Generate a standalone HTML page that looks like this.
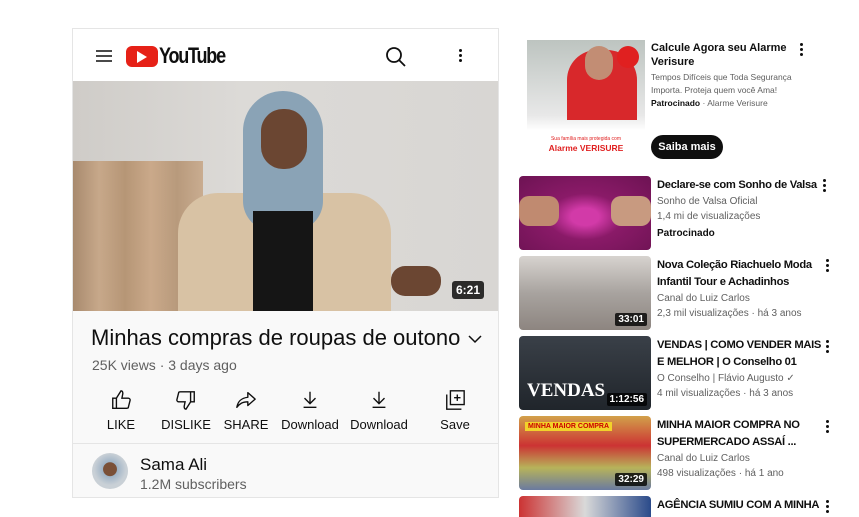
<!DOCTYPE html>
<html><head><meta charset="utf-8"><style>
*{margin:0;padding:0;box-sizing:border-box}
html,body{width:859px;height:517px;overflow:hidden}
body{background:#fff;font-family:"Liberation Sans",Arial,sans-serif;position:relative;color:#0f0f0f}
.card{position:absolute;left:72px;top:28px;width:427px;height:470px;border:1px solid #e5e5e5;background:#f9f9f9}
.hdr{position:absolute;left:0;top:0;width:425px;height:52px;background:#fff}
.video{position:absolute;left:0;top:52px;width:425px;height:230px;background:linear-gradient(90deg,#cfccc8,#dcdad7 40%,#d8d6d3);overflow:hidden}
.abs{position:absolute}
.act{position:absolute;top:360px;width:70px;text-align:center;font-size:13px}
.act svg{display:block;margin:0 auto 6px}
.r{position:absolute;left:657px;font-size:12px;line-height:16px;white-space:nowrap}
.r b{font-weight:bold;color:#0f0f0f;display:block;font-size:11.2px;line-height:17px;letter-spacing:-0.3px}
.r span{color:#606060;font-size:10px;display:block;line-height:15px}
.r i{font-style:normal;font-weight:bold;font-size:10px;color:#0f0f0f}
.th{position:absolute;left:519px;width:132px;height:74px;border-radius:4px;overflow:hidden}
.dur{position:absolute;right:4px;bottom:4px;background:rgba(0,0,0,.8);color:#fff;font-size:10px;font-weight:bold;padding:1px 3px;border-radius:2px}
.dots{position:absolute;width:3px}
.dots i{display:block;width:3px;height:3px;border-radius:50%;background:#0f0f0f;margin-bottom:2px}
</style></head><body>
<div class="card">
 <div class="hdr">
  <svg class="abs" style="left:22px;top:20px" width="18" height="14"><path d="M1 2h16M1 7h16M1 12h16" stroke="#0f0f0f" stroke-width="1.6"/></svg>
  <div class="abs" style="left:53px;top:17px;width:32px;height:21px;background:#e62117;border-radius:6px"></div>
  <svg class="abs" style="left:64px;top:22px" width="11" height="12"><path d="M0 0L10 6L0 12Z" fill="#fff"/></svg>
  <div class="abs" style="left:86px;top:14px;font-size:22px;font-weight:bold;letter-spacing:-1.5px;transform:scaleX(.82);transform-origin:left">YouTube</div>
  <svg class="abs" style="left:312px;top:17px" width="22" height="22"><circle cx="9" cy="9" r="7" fill="none" stroke="#0f0f0f" stroke-width="1.8"/><path d="M14 14l6 6" stroke="#0f0f0f" stroke-width="1.8"/></svg>
  <div class="dots" style="left:386px;top:20px"><i></i><i></i><i></i></div>
 </div>
 <div class="video">
  <div class="abs" style="left:0;top:80px;width:130px;height:150px;background:linear-gradient(90deg,#a88a6e,#c7a88a 20%,#b69676 40%,#caa98a 60%,#b89a7c 80%,#c9ac90)"></div>
  <div class="abs" style="left:105px;top:112px;width:213px;height:118px;background:#d8c2a4;border-radius:40px 40px 0 0"></div>
  <div class="abs" style="left:170px;top:10px;width:80px;height:140px;background:#8aa3b6;border-radius:40px 40px 30px 30px"></div>
  <div class="abs" style="left:188px;top:28px;width:46px;height:60px;background:#6b4632;border-radius:22px"></div>
  <div class="abs" style="left:180px;top:130px;width:60px;height:100px;background:#151515"></div>
  <div class="abs" style="left:318px;top:185px;width:50px;height:30px;background:#6b4632;border-radius:14px"></div>
  <div class="abs" style="right:14px;bottom:12px;background:rgba(0,0,0,.8);color:#fff;font-size:12px;font-weight:bold;padding:2px 4px;border-radius:3px">6:21</div>
 </div>
 <div class="abs" style="left:18px;top:296px;font-size:22px">Minhas compras de roupas de outono</div>
 <svg class="abs" style="left:395px;top:306px" width="14" height="9"><path d="M1 1l6 6 6-6" fill="none" stroke="#0f0f0f" stroke-width="1.5"/></svg>
 <div class="abs" style="left:19px;top:328px;font-size:14px;color:#606060">25K views · 3 days ago</div>
 <div class="act" style="left:13px"><svg width="22" height="22" viewBox="0 0 24 24"><path d="M3 10h4v11H3zM7 10l5-8c2 0 2 2 2 3l-1 5h7c1 0 2 1 2 2l-2 8c0 1-1 1-2 1H7" fill="none" stroke="#0f0f0f" stroke-width="1.5"/></svg>LIKE</div>
 <div class="act" style="left:78px"><svg width="22" height="22" viewBox="0 0 24 24"><path d="M21 14h-4V3h4zM17 14l-5 8c-2 0-2-2-2-3l1-5H4c-1 0-2-1-2-2l2-8c0-1 1-1 2-1h11" fill="none" stroke="#0f0f0f" stroke-width="1.5"/></svg>DISLIKE</div>
 <div class="act" style="left:138px"><svg width="22" height="22" viewBox="0 0 24 24"><path d="M14 4l8 7-8 7v-4c-6 0-9 2-12 6 1-6 4-10 12-11z" fill="none" stroke="#0f0f0f" stroke-width="1.5" stroke-linejoin="round"/></svg>SHARE</div>
 <div class="act" style="left:202px;width:70px"><svg width="22" height="22" viewBox="0 0 24 24"><path d="M12 3v13M6 10l6 6 6-6M5 20h14" fill="none" stroke="#0f0f0f" stroke-width="1.5"/></svg>Download</div>
 <div class="act" style="left:271px;width:70px"><svg width="22" height="22" viewBox="0 0 24 24"><path d="M12 3v13M6 10l6 6 6-6M5 20h14" fill="none" stroke="#0f0f0f" stroke-width="1.5"/></svg>Download</div>
 <div class="act" style="left:347px"><svg width="22" height="22" viewBox="0 0 24 24"><path d="M7 2h15v15H7zM3 6v16h16M14.5 6v7M11 9.5h7" fill="none" stroke="#0f0f0f" stroke-width="1.5"/></svg>Save</div>
 <div class="abs" style="left:0;top:414px;width:425px;height:1px;background:#e5e5e5"></div>
 <div class="abs" style="left:19px;top:424px;width:36px;height:36px;border-radius:50%;background:radial-gradient(circle at 50% 45%,#7a5038 25%,#9fb3c6 27%,#c9d0d6 60%)"></div>
 <div class="abs" style="left:67px;top:426px;font-size:17px">Sama Ali</div>
 <div class="abs" style="left:67px;top:447px;font-size:14px;color:#606060">1.2M subscribers</div>
</div>

<div class="abs" style="left:527px;top:40px;width:118px;height:116px;background:linear-gradient(180deg,#bdc4c0,#e8e8e8 65%,#fff 78%)">
 <div class="abs" style="left:40px;top:10px;width:70px;height:70px;background:#d8282b;border-radius:30px 30px 0 0"></div>
 <div class="abs" style="left:58px;top:6px;width:28px;height:34px;background:#c28d74;border-radius:14px"></div>
 <div class="abs" style="left:90px;top:6px;width:22px;height:22px;background:#e02020;border-radius:50%"></div>
 <div class="abs" style="left:0;top:96px;width:118px;text-align:center;color:#e02020;font-size:5px">Sua família mais protegida com</div>
 <div class="abs" style="left:0;top:103px;width:118px;text-align:center;color:#e02020;font-size:8.5px;font-weight:bold">Alarme VERISURE</div>
</div>
<div class="r" style="top:41px;left:651px"><b style="font-size:11px;line-height:14px;letter-spacing:0">Calcule Agora seu Alarme<br>Verisure</b><span style="font-size:8.5px;line-height:13px;margin-top:2px">Tempos Difíceis que Toda Segurança<br>Importa. Proteja quem você Ama!</span><span style="font-size:8.5px;line-height:13px"><i style="font-size:8.5px">Patrocinado</i> · Alarme Verisure</span></div>
<div class="abs" style="left:651px;top:135px;width:72px;height:24px;border-radius:12px;background:#0f0f0f;color:#fff;font-size:11px;font-weight:bold;text-align:center;line-height:24px">Saiba mais</div>
<div class="dots" style="left:800px;top:43px"><i></i><i></i><i></i></div>

<div class="th" style="top:176px;background:radial-gradient(ellipse at 50% 55%,#d23aa8 15%,#8a1a68 40%,#6d1353)"><div class="abs" style="left:0;top:20px;width:40px;height:30px;background:#c08a70;border-radius:10px"></div><div class="abs" style="right:0;top:20px;width:40px;height:30px;background:#c89a80;border-radius:10px"></div></div>
<div class="r" style="top:177px"><b>Declare-se com Sonho de Valsa</b><span>Sonho de Valsa Oficial</span><span>1,4 mi de visualizações</span><i>Patrocinado</i></div>
<div class="dots" style="left:823px;top:179px"><i></i><i></i><i></i></div>

<div class="th" style="top:256px;background:linear-gradient(180deg,#d7d3cf,#a8a39f 50%,#8d8580)"><div class="dur">33:01</div></div>
<div class="r" style="top:257px"><b>Nova Coleção Riachuelo Moda<br>Infantil Tour e Achadinhos</b><span>Canal do Luiz Carlos</span><span>2,3 mil visualizações · há 3 anos</span></div>
<div class="dots" style="left:826px;top:259px"><i></i><i></i><i></i></div>

<div class="th" style="top:336px;background:linear-gradient(180deg,#3a4048,#20252b)"><div class="abs" style="left:8px;top:44px;color:#fff;font-weight:bold;font-size:19px;font-family:'Liberation Serif',serif">VENDAS</div><div class="dur">1:12:56</div></div>
<div class="r" style="top:337px"><b>VENDAS | COMO VENDER MAIS<br>E MELHOR | O Conselho 01</b><span>O Conselho | Flávio Augusto ✓</span><span>4 mil visualizações · há 3 anos</span></div>
<div class="dots" style="left:826px;top:340px"><i></i><i></i><i></i></div>

<div class="th" style="top:416px;background:linear-gradient(180deg,#d2a14a,#c33 40%,#b7b35a 70%,#6a7aa0)"><div class="abs" style="left:6px;top:6px;background:#f2d22a;color:#c00;font-size:7px;font-weight:bold;padding:1px 3px">MINHA MAIOR COMPRA</div><div class="dur">32:29</div></div>
<div class="r" style="top:417px"><b>MINHA MAIOR COMPRA NO<br>SUPERMERCADO ASSAÍ ...</b><span>Canal do Luiz Carlos</span><span>498 visualizações · há 1 ano</span></div>
<div class="dots" style="left:826px;top:420px"><i></i><i></i><i></i></div>

<div class="th" style="top:496px;height:21px;border-radius:4px 4px 0 0;background:linear-gradient(90deg,#c33,#d9d9d9,#2a4a8a)"></div>
<div class="r" style="top:497px"><b>AGÊNCIA SUMIU COM A MINHA</b></div>
<div class="dots" style="left:826px;top:500px"><i></i><i></i><i></i></div>
</body></html>
